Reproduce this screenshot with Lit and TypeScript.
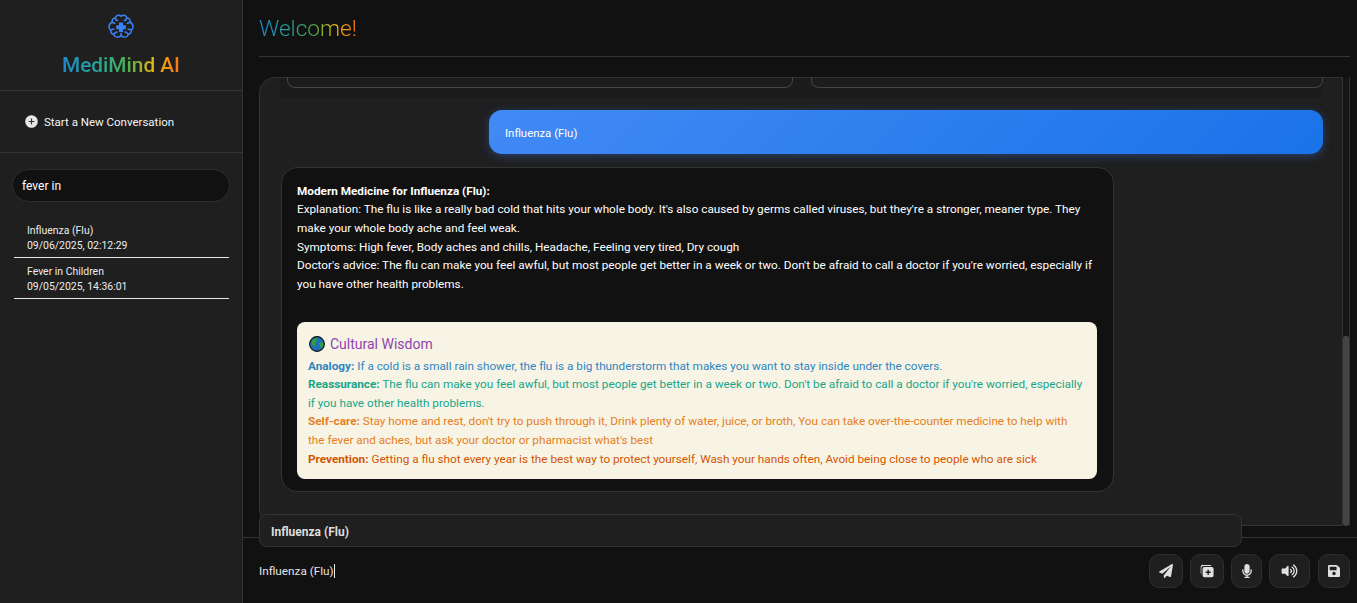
import { LitElement, html, css, svg } from "lit";
import { customElement } from "lit/decorators.js";

const planeIcon = svg`<path d="M476 3.2L12.5 270.6c-18.1 10.4-15.8 35.6 2.2 43.2L121 358.4l287.3-253.2c5.5-4.9 13.3 2.6 8.6 8.3L176 407v80.5c0 23.6 28.5 32.9 42.5 15.8L282 426l124.6 52.2c14.2 6 30.4-2.9 33-18.2l72-432C515 7.8 493.3-6.8 476 3.2z"/>`;
const micIcon = svg`<path d="M176 352c53.02 0 96-42.98 96-96V96c0-53.02-42.98-96-96-96S80 42.98 80 96v160c0 53.02 42.98 96 96 96zm160-160h-16c-8.84 0-16 7.16-16 16v48c0 74.8-64.5 134.82-140.79 127.38C96.71 376.89 48 317.11 48 250.3V208c0-8.84-7.16-16-16-16H16c-8.84 0-16 7.16-16 16v40.16c0 89.64 63.97 169.55 152 181.69V464H96c-8.84 0-16 7.16-16 16v16c0 8.84 7.16 16 16 16h160c8.84 0 16-7.16 16-16v-16c0-8.84-7.16-16-16-16h-56v-33.77C285.71 418.47 352 344.9 352 256v-48c0-8.84-7.16-16-16-16z"/>`;
const volumeIcon = svg`<path d="M215.03 71.05L126.06 160H24c-13.26 0-24 10.74-24 24v144c0 13.25 10.74 24 24 24h102.06l88.97 88.95c15.03 15.03 40.97 4.47 40.97-16.97V88.02c0-21.46-25.96-31.98-40.97-16.97zm233.32-51.08c-11.17-7.33-26.18-4.24-33.51 6.95-7.34 11.17-4.22 26.18 6.95 33.51 66.27 43.49 105.82 116.6 105.82 195.58 0 78.98-39.55 152.09-105.82 195.58-11.17 7.32-14.29 22.34-6.95 33.5 7.04 10.71 21.93 14.56 33.51 6.95C528.27 439.58 576 351.33 576 256S528.27 72.43 448.35 19.97zM480 256c0-63.53-32.06-121.94-85.77-156.24-11.19-7.14-26.03-3.82-33.12 7.46s-3.78 26.21 7.41 33.36C408.27 165.97 432 209.11 432 256s-23.73 90.03-63.48 115.42c-11.19 7.14-14.5 22.07-7.41 33.36 6.51 10.36 21.12 15.14 33.12 7.46C447.94 377.94 480 319.54 480 256zm-141.77-76.87c-11.58-6.33-26.19-2.16-32.61 9.45-6.39 11.61-2.16 26.2 9.45 32.61C327.98 228.28 336 241.63 336 256c0 14.38-8.02 27.72-20.92 34.81-11.61 6.41-15.84 21-9.45 32.61 6.43 11.66 21.05 15.8 32.61 9.45 28.23-15.55 45.77-45 45.77-76.88s-17.54-61.32-45.78-76.86z"/>`;
const saveIcon = svg`<path d="M433.941 129.941l-83.882-83.882A48 48 0 0 0 316.118 32H48C21.49 32 0 53.49 0 80v352c0 26.51 21.49 48 48 48h352c26.51 0 48-21.49 48-48V163.882a48 48 0 0 0-14.059-33.941zM224 416c-35.346 0-64-28.654-64-64 0-35.346 28.654-64 64-64s64 28.654 64 64c0 35.346-28.654 64-64 64zm96-304.52V212c0 6.627-5.373 12-12 12H76c-6.627 0-12-5.373-12-12V108c0-6.627 5.373-12 12-12h228.52c3.183 0 6.235 1.264 8.485 3.515l3.48 3.48A11.996 11.996 0 0 1 320 111.48z"/>`;

@customElement("app-root")
export class AppRoot extends LitElement {
  static styles = css`
    :host { display: block; width: 1357px; height: 603px; overflow: hidden; background: #111; color: #fff; font-family: "Roboto", "Open Sans", sans-serif; font-size: 11.75px; }
    * { box-sizing: border-box; }
    .app { display: grid; grid-template-columns: 243px 1fr; height: 603px; }
    .side { background: #1f1f1f; border-right: 1px solid #333; display: flex; flex-direction: column; }
    .brand { height: 91px; border-bottom: 1px solid #333; display: flex; flex-direction: column; align-items: center; padding-top: 13px; }
    .brand svg { width: 28px; height: 28px; display: block; }
    .grad { background: linear-gradient(90deg, #1e88c9, #26a69a 30%, #4caf50 55%, #ecb90c 78%, #f97316); -webkit-background-clip: text; background-clip: text; color: transparent; }
    .brand .grad { font-size: 20.8px; font-weight: 500; margin-top: 11px; line-height: 26px; }
    .new { height: 62px; border-bottom: 1px solid #333; display: flex; align-items: center; gap: 6px; padding: 0 25px; font-size: 11.5px; color: #f4f4f4; }
    .new svg { width: 13px; height: 13px; }
    .search-wrap { padding: 16px 12px 0; }
    .search { height: 33px; border: 1px solid #2e2e2e; background: #111; border-radius: 17px; padding: 0 9px; display: flex; align-items: center; color: #fff; font-size: 12px; }
    .hist { padding: 15px 13px 0 14px; }
    .item { height: 41px; border-bottom: 1px solid #e6e6e6; padding: 6px 13px 0; line-height: 15px; font-size: 10.45px; color: #ececec; }
    .main { display: flex; flex-direction: column; min-width: 0; position: relative; }
    .head { margin: 0 7px 0 16px; height: 57px; border-bottom: 1px solid #333; padding-top: 13px; }
    .head .grad { display: inline-block; font-size: 22.6px; font-weight: 300; line-height: 32px; }
    .chatwrap { margin: 20px 7px 0 16px; height: 449px; display: flex; }
    .chat { flex: 1; background: #1f1f1f; border: 1px solid #333; border-radius: 16px 0 0 16px; overflow: hidden; padding: 0 19px 0 20px; }
    .track { width: 7px; background: #151515; border-right: 1px solid #333; display: flex; align-items: flex-end; }
    .thumb { width: 100%; height: 190px; background: #444; border-radius: 3px 3px 4px 4px; }
    .prev { height: 20px; background: #1c1c1c; display: grid; grid-template-columns: 506px 512px; gap: 18px; padding: 0 0 0 7px; }
    .prev div { height: 10px; border: 1px solid #444; border-top: 0; border-radius: 0 0 8px 8px; }
    .user { margin: 12px 0 0 209px; height: 44px; border-radius: 13px; padding: 1px 16px 0; display: flex; align-items: center; background: linear-gradient(135deg, #428af5, #1a73e8); box-shadow: 0 2px 10px rgba(59,130,246,.35); color: #fff; font-size: 11.4px; }
    .bot { margin: 13px 0 0 1px; width: 833px; height: 325px; background: #111; border: 1px solid #333; border-radius: 16px; padding: 13.6px 16px 0 15px; line-height: 18.65px; color: #fff; }
    .bot b { font-weight: 700; }
    .culture { margin-top: 28.4px; height: 157px; background: #f8f4e5; border-radius: 8px; padding: 12px 11px; line-height: 18.65px; }
    .culture h4 { margin: 0 0 1.6px 1px; display: flex; align-items: center; gap: 5px; font-size: 14px; font-weight: 400; color: #8e44ad; line-height: 21px; }
    .culture h4 svg { width: 16px; height: 16px; }
    .c1 { color: #2e86c1; } .c2 { color: #17a589; } .c3 { color: #e67e22; } .c4 { color: #d35400; }
    .suggest { position: absolute; left: 16px; top: 514px; width: 983px; height: 33px; background: #1f1f1f; border: 1px solid #333; border-radius: 8px; padding: 2px 11px 0; display: flex; align-items: center; font-weight: 700; color: #ddd; font-size: 12px; }
    .input { margin-top: 11px; flex: 1; border-top: 1px solid #333; display: flex; align-items: center; padding: 0 7px 0 16px; justify-content: space-between; }
    .typed { color: #e4e4e4; display: flex; align-items: center; }
    .caret { display: inline-block; width: 1px; height: 14px; background: #eee; }
    .btns { display: flex; gap: 7px; }
    .btn { height: 34px; width: 34px; border-radius: 10px; background: #1f1f1f; border: 1px solid #2e2e2e; display: flex; align-items: center; justify-content: center; }
    .btn.mic { width: 31px; } .btn.vol { width: 41px; } .btn.save { width: 32px; margin-left: 1px; }
    .btn svg { fill: #e0e0e0; display: block; }
  `;

  render() {
    return html`<div class="app">
      <aside class="side">
        <div class="brand">
          <svg viewBox="0 0 28 28" fill="none" stroke="#3b82f6" stroke-width="1.5" stroke-linecap="round" stroke-linejoin="round">
            <path d="M14 3.2c-1.3-1.3-3.6-1.3-4.8 0-.5.5-.8 1.1-.8 1.7-1.8-.1-3.3 1.3-3.3 3 0 .4.1.8.2 1.1C3.3 9.9 2 11.6 2 13.7c0 1.5.7 2.8 1.8 3.6-.4 1.9 1.1 3.8 3 3.9.2 1.9 2 3.3 3.9 2.9 1.1 0 2.4-.5 3.3-1.6.9 1.1 2.2 1.6 3.3 1.6 1.9.4 3.7-1 3.9-2.9 1.9-.1 3.4-2 3-3.9 1.1-.8 1.8-2.1 1.8-3.6 0-2.1-1.3-3.8-3.1-4.7.1-.3.2-.7.2-1.1 0-1.7-1.5-3.1-3.3-3 0-.6-.3-1.2-.8-1.7-1.2-1.3-3.5-1.3-4.8 0z"/>
            <path d="M8.4 5c0 1.4 1 2.4 2.2 2.6M19.6 5c0 1.4-1 2.4-2.2 2.6M5.3 9c.8 1 1.6 1.3 2.6 1.3M22.7 9c-.8 1-1.6 1.3-2.6 1.3M3.8 17.3c1-.9 2-1.2 3-1M24.2 17.3c-1-.9-2-1.2-3-1M6.8 21.2c.6-1.4 1.8-2.2 3.2-2.2M21.2 21.2c-.6-1.4-1.8-2.2-3.2-2.2M14 22.9v-2.6"/>
            <path d="M12 9.5h4v2.7h2.8v4H16v2.8h-4v-2.8H9.2v-4H12z" fill="#3b82f6" stroke="none"/>
          </svg>
          <div class="grad">MediMind AI</div>
        </div>
        <div class="new">
          <svg viewBox="0 0 13 13"><circle cx="6.5" cy="6.5" r="6.3" fill="#e8e8e8"/><path d="M6.5 3.6v5.8M3.6 6.5h5.8" stroke="#333" stroke-width="1.2"/></svg>
          <span>Start a New Conversation</span>
        </div>
        <div class="search-wrap"><div class="search">fever in</div></div>
        <div class="hist">
          <div class="item">Influenza (Flu)<br>09/06/2025, 02:12:29</div>
          <div class="item">Fever in Children<br>09/05/2025, 14:36:01</div>
        </div>
      </aside>
      <main class="main">
        <div class="head"><span class="grad">Welcome!</span></div>
        <div class="chatwrap">
          <div class="chat">
            <div class="prev"><div></div><div></div></div>
            <div class="user">Influenza (Flu)</div>
            <div class="bot">
              <b>Modern Medicine for Influenza (Flu):</b><br>
              Explanation: The flu is like a really bad cold that hits your whole body. It's also caused by germs called viruses, but they're a stronger, meaner type. They make your whole body ache and feel weak.<br>
              Symptoms: High fever, Body aches and chills, Headache, Feeling very tired, Dry cough<br>
              Doctor's advice: The flu can make you feel awful, but most people get better in a week or two. Don't be afraid to call a doctor if you're worried, especially if you have other health problems.
              <div class="culture">
                <h4>
                  <svg viewBox="0 0 16 16"><circle cx="8" cy="8" r="7.4" fill="#1f6fb5" stroke="#111" stroke-width="1.1"/><path d="M3 5c1.5-2 3.5-3 5.5-2.6L8 5 6 6l.5 3L5 11 3 8zM10 7l3.5-1 1 3-2.5 3.5L10.5 10z" fill="#2f9e44"/></svg>
                  Cultural Wisdom
                </h4>
                <div class="c1"><b>Analogy:</b> If a cold is a small rain shower, the flu is a big thunderstorm that makes you want to stay inside under the covers.</div>
                <div class="c2"><b>Reassurance:</b> The flu can make you feel awful, but most people get better in a week or two. Don't be afraid to call a doctor if you're worried, especially if you have other health problems.</div>
                <div class="c3"><b>Self-care:</b> Stay home and rest, don't try to push through it, Drink plenty of water, juice, or broth, You can take over-the-counter medicine to help with the fever and aches, but ask your doctor or pharmacist what's best</div>
                <div class="c4"><b>Prevention:</b> Getting a flu shot every year is the best way to protect yourself, Wash your hands often, Avoid being close to people who are sick</div>
              </div>
            </div>
          </div>
          <div class="track"><div class="thumb"></div></div>
        </div>
        <div class="suggest">Influenza (Flu)</div>
        <div class="input">
          <div class="typed">Influenza (Flu)<span class="caret"></span></div>
          <div class="btns">
            <div class="btn"><svg width="14" height="14" viewBox="0 0 512 512">${planeIcon}</svg></div>
            <div class="btn"><svg width="14" height="14" viewBox="0 0 16 16"><path d="M3.5 1h8a2 2 0 0 1 1.8 1.2H4A2.4 2.4 0 0 0 1.5 4.6v7.2A2 2 0 0 1 .8 10.3V3.5A2.5 2.5 0 0 1 3.5 1z"/><path fill-rule="evenodd" d="M5 3.5h8.5a2 2 0 0 1 2 2v7.5a2 2 0 0 1-2 2H5a2 2 0 0 1-2-2V5.5a2 2 0 0 1 2-2zM8.5 6.5v2H6.500v1.7h2v2h1.7v-2h2V8.500h-2v-2z"/></svg></div>
            <div class="btn mic"><svg width="10" height="14" viewBox="0 0 352 512">${micIcon}</svg></div>
            <div class="btn vol"><svg width="17" height="14" viewBox="0 0 576 512">${volumeIcon}</svg></div>
            <div class="btn save"><svg width="12" height="14" viewBox="0 0 448 512">${saveIcon}</svg></div>
          </div>
        </div>
      </main>
    </div>`;
  }
}
